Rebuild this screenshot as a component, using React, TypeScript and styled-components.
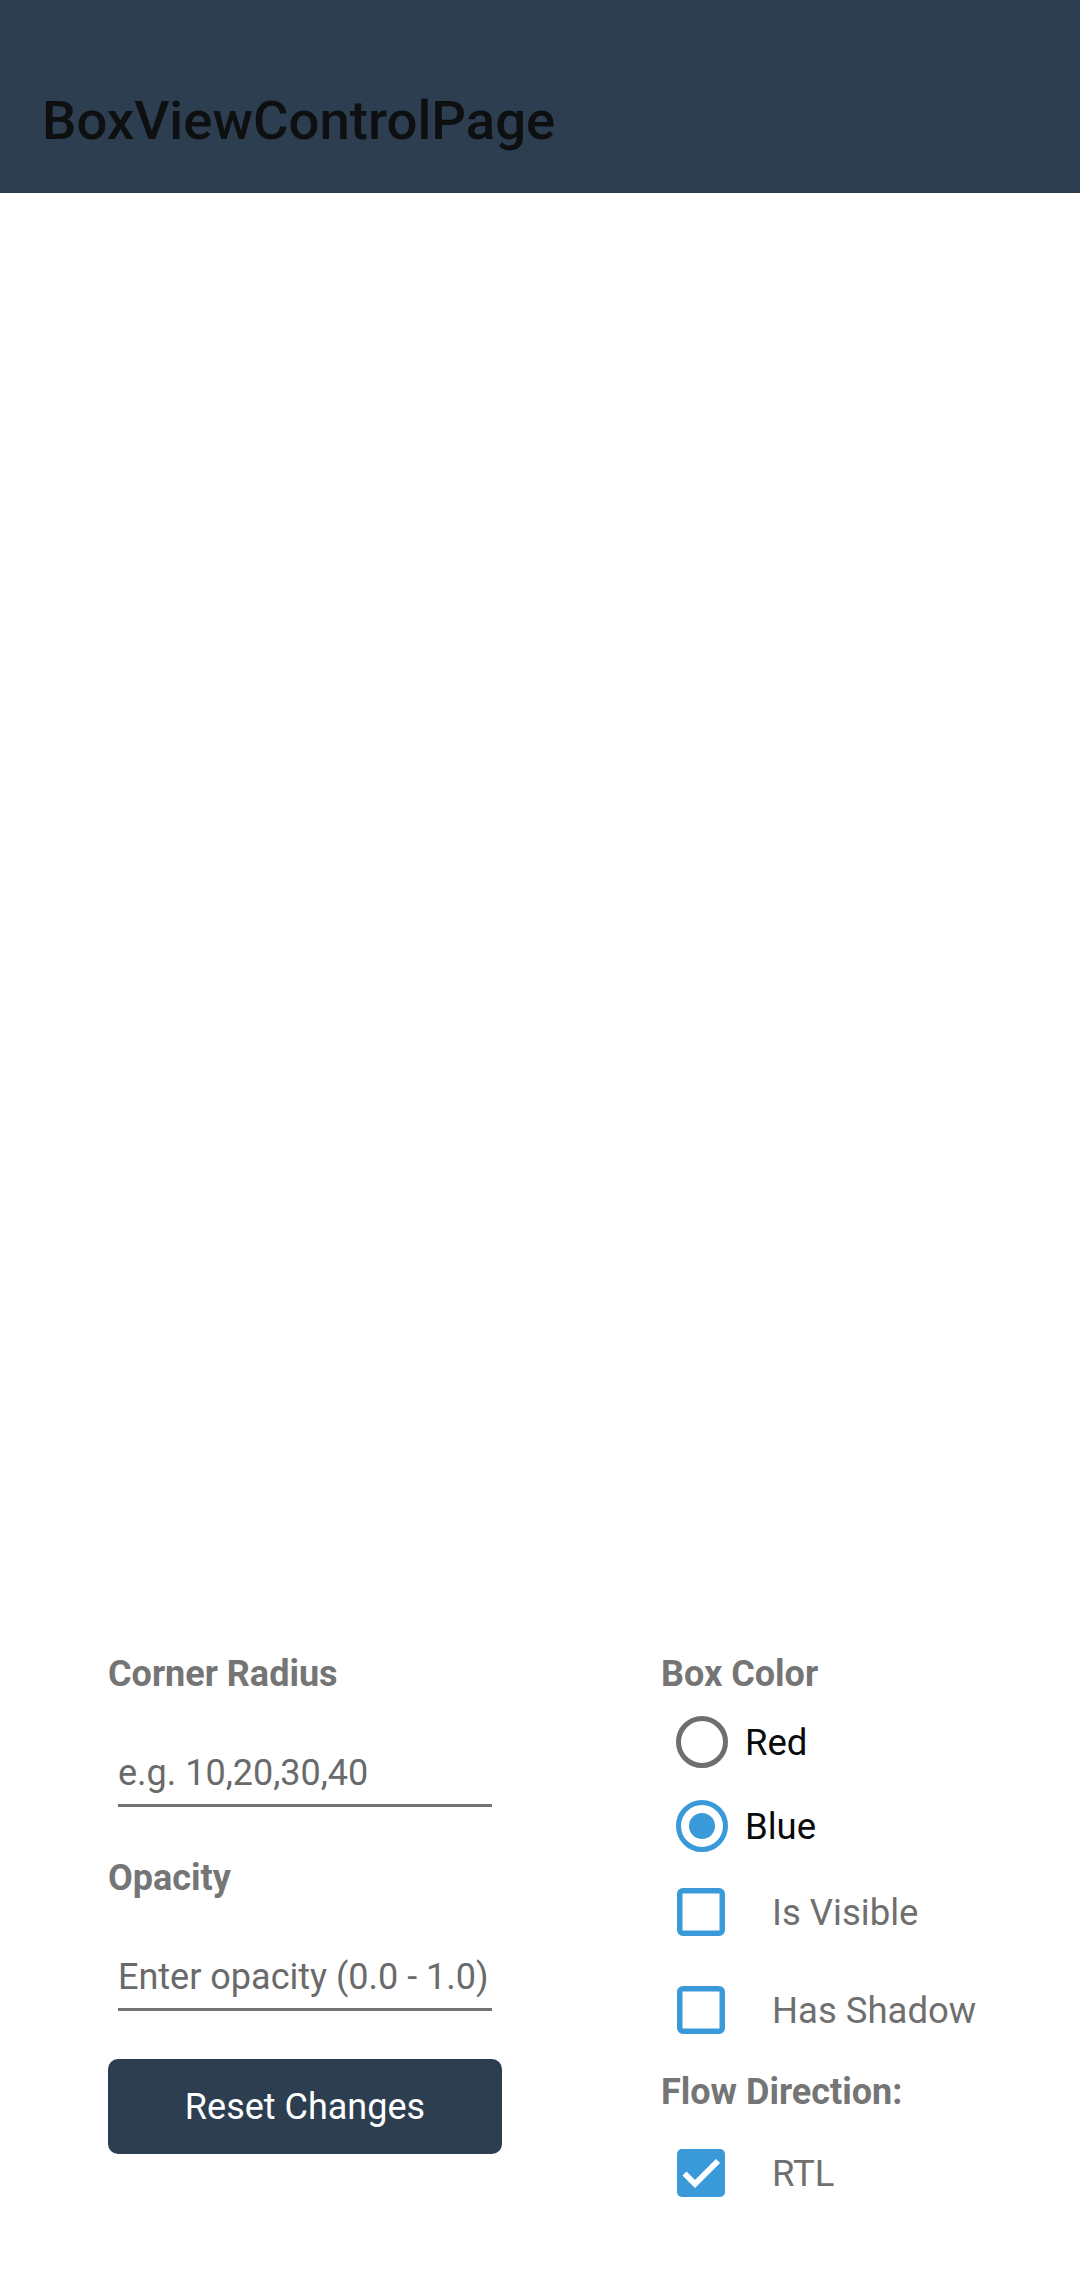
import React from "react";
import styled, { createGlobalStyle } from "styled-components";

const GlobalStyle = createGlobalStyle`
  html, body {
    margin: 0;
    padding: 0;
    background: #ffffff;
  }
  body {
    font-family: Roboto, "Liberation Sans", sans-serif;
  }
  * { box-sizing: border-box; }
`;

const Page = styled.div`
  width: 1080px;
  height: 2289px;
  display: flex;
  flex-direction: column;
  background: #ffffff;
  overflow: hidden;
`;

const Toolbar = styled.header`
  height: 193px;
  flex: none;
  background: #2c3e50;
  display: flex;
  align-items: flex-end;
  padding: 0 0 41px 42px;
`;

const Title = styled.h1`
  margin: 0;
  font-family: Roboto, "Liberation Sans", sans-serif;
  font-weight: 500;
  font-size: 54.5px;
  line-height: 64px;
  color: #0e0f11;
`;

const Canvas = styled.main`
  flex: 1;
  display: flex;
  flex-direction: column;
  justify-content: flex-end;
  padding-bottom: 92px;
`;

const Controls = styled.section`
  display: grid;
  grid-template-columns: 394px 1fr;
  column-gap: 159px;
  padding-left: 108px;
  align-items: start;
`;

const Column = styled.div`
  display: flex;
  flex-direction: column;
`;

const Label = styled.div<{ $top?: number }>`
  font-family: Roboto, "Liberation Sans", sans-serif;
  font-weight: 700;
  font-size: 36px;
  line-height: 43px;
  color: #757575;
  margin-top: ${(p) => p.$top ?? 0}px;
`;

const Entry = styled.input`
  display: block;
  margin: 55px 10px 0 10px;
  width: 374px;
  height: 56px;
  padding: 0 0 10px 0;
  border: none;
  border-bottom: 3px solid #727272;
  background: transparent;
  font-family: Roboto, "Liberation Sans", sans-serif;
  font-size: 36px;
  line-height: 43px;
  color: #222;
  outline: none;
  &::placeholder {
    color: #6a6a6a;
    opacity: 1;
  }
`;

const ResetButton = styled.button`
  margin-top: 48px;
  width: 394px;
  height: 95px;
  border: none;
  border-radius: 10px;
  background: #2c3e50;
  color: #ffffff;
  font-family: Roboto, "Liberation Sans", sans-serif;
  font-size: 36px;
  padding: 0;
`;

const RadioRow = styled.label<{ $top: number }>`
  display: flex;
  align-items: center;
  height: 52px;
  margin-top: ${(p) => p.$top}px;
  padding-left: 15px;
  gap: 17px;
  font-family: Roboto, "Liberation Sans", sans-serif;
  font-size: 36.5px;
  color: #0a0a0a;
`;

const RadioRing = styled.span<{ $on: boolean }>`
  width: 52px;
  height: 52px;
  flex: none;
  border-radius: 50%;
  border: 5.5px solid ${(p) => (p.$on ? "#3a9ad9" : "#6e6e6e")};
  display: flex;
  align-items: center;
  justify-content: center;
  &::after {
    content: "";
    display: ${(p) => (p.$on ? "block" : "none")};
    width: 26px;
    height: 26px;
    border-radius: 50%;
    background: #3a9ad9;
  }
`;

const CheckRow = styled.label<{ $top: number }>`
  display: flex;
  align-items: center;
  height: 48px;
  margin-top: ${(p) => p.$top}px;
  padding-left: 16px;
  gap: 47px;
  font-family: Roboto, "Liberation Sans", sans-serif;
  font-size: 36.5px;
  color: #6f6f6f;
`;

const CheckBox = ({ checked }: { checked: boolean }) => (
  <svg width="48" height="48" viewBox="0 0 48 48" style={{ flex: "none" }}>
    {checked ? (
      <>
        <rect x="0" y="0" width="48" height="48" rx="5" fill="#3a9ad9" />
        <polyline
          points="7.5,24.5 18,35 41,12"
          fill="none"
          stroke="#ffffff"
          strokeWidth="5.8"
        />
      </>
    ) : (
      <rect
        x="2.75"
        y="2.75"
        width="42.5"
        height="42.5"
        rx="3"
        fill="none"
        stroke="#3a9ad9"
        strokeWidth="5.5"
      />
    )}
  </svg>
);

export default function App() {
  return (
    <Page>
      <GlobalStyle />
      <Toolbar>
        <Title>BoxViewControlPage</Title>
      </Toolbar>
      <Canvas>
        <Controls>
          <Column>
            <Label>Corner Radius</Label>
            <Entry placeholder="e.g. 10,20,30,40" />
            <Label $top={50}>Opacity</Label>
            <Entry placeholder="Enter opacity (0.0 - 1.0)" />
            <ResetButton>Reset Changes</ResetButton>
          </Column>
          <Column>
            <Label>Box Color</Label>
            <RadioRow $top={20}>
              <RadioRing $on={false} />
              Red
            </RadioRow>
            <RadioRow $top={32}>
              <RadioRing $on={true} />
              Blue
            </RadioRow>
            <CheckRow $top={36}>
              <CheckBox checked={false} />
              Is Visible
            </CheckRow>
            <CheckRow $top={50}>
              <CheckBox checked={false} />
              Has Shadow
            </CheckRow>
            <Label $top={37}>Flow Direction:</Label>
            <CheckRow $top={35}>
              <CheckBox checked={true} />
              RTL
            </CheckRow>
          </Column>
        </Controls>
      </Canvas>
    </Page>
  );
}
